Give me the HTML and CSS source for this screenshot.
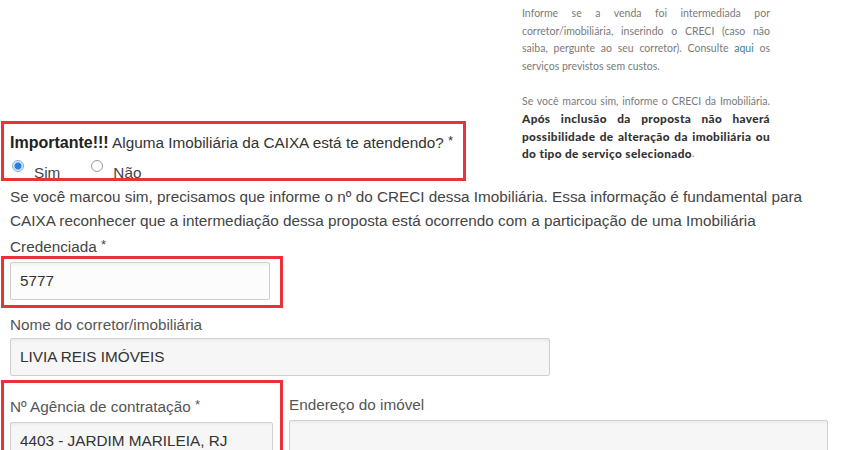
FILE: index.html
```html
<!DOCTYPE html>
<html lang="pt-BR">
<head>
    <meta charset="UTF-8">
    <meta name="viewport" content="width=device-width, initial-scale=1.0">
    <title>Proposta - Imobiliária</title>
    <link rel="stylesheet" href="styles.css">
</head>
<body>
    <div class="page">
        <div class="top">
            <div class="mark question">
                <div class="question-label"><strong>Importante!!!</strong> Alguma Imobiliária da CAIXA está te atendendo? <span class="req">*</span></div>
                <div class="options">
                    <label class="option"><span class="radio checked"></span><span class="option-text">Sim</span></label>
                    <label class="option"><span class="radio"></span><span class="option-text">Não</span></label>
                </div>
            </div>
            <div class="aside">
                <p>Informe se a venda foi intermediada por corretor/imobiliária, inserindo o CRECI (caso não saiba, pergunte ao seu corretor). Consulte <a href="#">aqui</a> os serviços previstos sem custos.</p>
                <p>Se você marcou sim, informe o CRECI da Imobiliária. <strong>Após inclusão da proposta não haverá possibilidade de alteração da imobiliária ou do tipo de serviço selecionado</strong>.</p>
            </div>
        </div>

        <p class="hint">Se você marcou sim, precisamos que informe o nº do CRECI dessa Imobiliária. Essa informação é fundamental para CAIXA reconhecer que a intermediação dessa proposta está ocorrendo com a participação de uma Imobiliária Credenciada <span class="req">*</span></p>

        <div class="mark creci">
            <input class="field field-light" type="text" value="5777">
        </div>

        <label class="label name-label">Nome do corretor/imobiliária</label>
        <input class="field name-field" type="text" value="LIVIA REIS IMÓVEIS" readonly>

        <div class="row">
            <div class="mark agency">
                <label class="label">Nº Agência de contratação <span class="req">*</span></label>
                <input class="field agency-field" type="text" value="4403 - JARDIM MARILEIA, RJ" readonly>
            </div>
            <div class="address">
                <label class="label">Endereço do imóvel</label>
                <input class="field address-field" type="text" value="">
            </div>
        </div>
    </div>
</body>
</html>
```

FILE: styles.css
```css
body {
    margin: 0;
    background: #fff;
    font-family: "Liberation Sans", Arial, sans-serif;
    font-size: 15.3px;
    color: #444;
    overflow: hidden;
}
.page {
    padding: 0 10px;
    height: 450px;
    overflow: hidden;
}
.top {
    display: flex;
    align-items: flex-end;
}
.mark {
    position: relative;
    margin-left: -9px;
}
.mark::after {
    content: "";
    position: absolute;
    top: 0;
    left: 0;
    right: 0;
    bottom: 0;
    border: 3px solid #e8333b;
    pointer-events: none;
}
.question {
    width: 465px;
    height: 60px;
    box-sizing: border-box;
    padding: 10px 0 0 9px;
}
.question-label {
    line-height: 20px;
    color: #333;
}
.question-label strong {
    color: #222;
    font-size: 16px;
}
.req {
    font-size: 13px;
    vertical-align: 3px;
}
.options {
    display: flex;
    gap: 31px;
    margin-top: 7px;
    padding-left: 2px;
}
.option {
    display: flex;
    align-items: flex-start;
    gap: 10px;
}
.radio {
    width: 10px;
    height: 10px;
    border: 1px solid #9a9a9a;
    border-radius: 50%;
    background: #fff;
    box-sizing: content-box;
}
.radio.checked {
    border-color: #7fb0e6;
    background: radial-gradient(circle, #2a7fe0 0 3px, #d6e7fa 4px);
}
.option-text {
    line-height: 18px;
    margin-top: 4px;
    color: #444;
}
.aside {
    width: 248px;
    margin-left: auto;
    margin-right: 70px;
    margin-bottom: 18px;
    padding-top: 5px;
    font-family: Lato, "Open Sans", sans-serif;
    font-size: 10.5px;
    line-height: 17.5px;
    color: #7a7a7a;
    text-align: justify;
}
.aside p {
    margin: 0 0 17.5px;
}
.aside p:last-child {
    margin-bottom: 0;
}
.aside a {
    color: #3a7f86;
    text-decoration: none;
}
.aside strong {
    color: #333;
    font-weight: 900;
    font-size: 11.8px;
    letter-spacing: 0.35px;
    vertical-align: top;
}
.hint {
    max-width: 810px;
    margin: 4px 0 0;
    line-height: 24px;
    color: #444;
}
.creci {
    width: 282px;
    box-sizing: border-box;
    margin-top: -3px;
    padding: 6px 9px 8px 9px;
}
.field {
    display: block;
    box-sizing: border-box;
    height: 38px;
    padding: 0 9px;
    border: 1px solid #cfcfcf;
    border-radius: 2px;
    background: linear-gradient(#ececec, #f6f6f6 4px, #f6f6f6);
    font-family: "Liberation Sans", Arial, sans-serif;
    font-size: 15.3px;
    color: #333;
    outline: none;
}
.field-light {
    width: 260px;
    background: linear-gradient(#f1f1f1, #fcfcfc 4px, #fcfcfc);
}
.label {
    display: block;
    line-height: 20px;
    color: #555;
}
.name-label {
    margin-top: 7px;
}
.name-field {
    width: 540px;
    margin-top: 3px;
}
.row {
    display: flex;
    align-items: flex-start;
    gap: 6px;
    margin-top: 4px;
}
.agency {
    width: 282px;
    height: 80px;
    box-sizing: border-box;
    padding: 15px 8px 0 9px;
}
.agency-field {
    width: 263px;
    margin-top: 5px;
}
.address {
    padding-top: 15px;
}
.address-field {
    width: 539px;
    margin-top: 5px;
}
```
